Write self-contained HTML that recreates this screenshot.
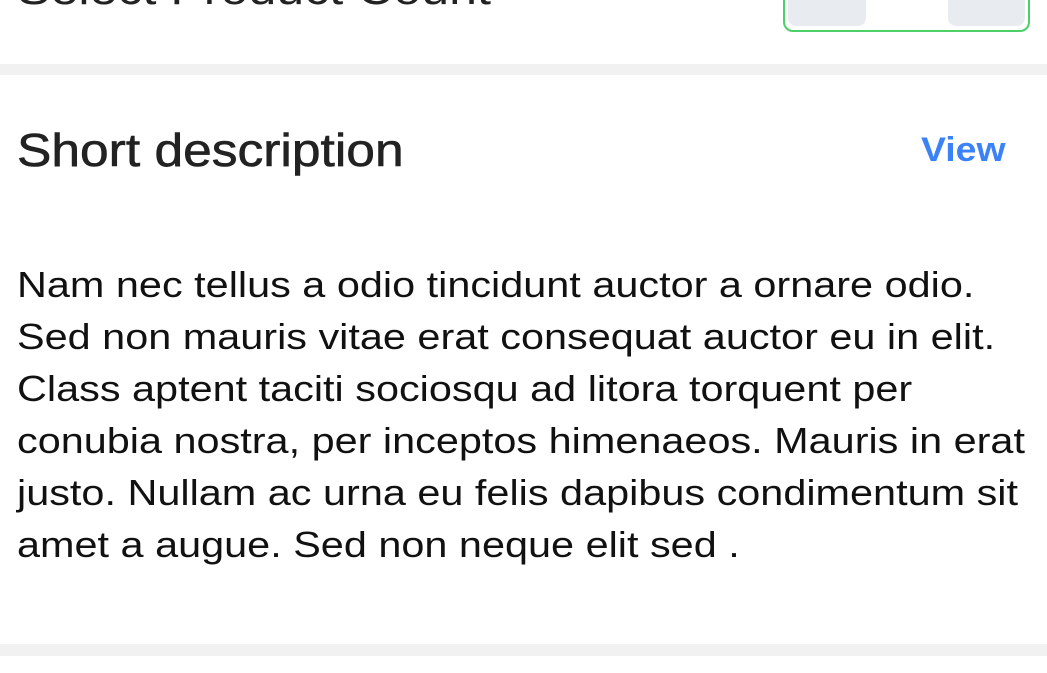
<!DOCTYPE html>
<html><head><meta charset="utf-8"><style>
html,body{margin:0;padding:0;width:1047px;height:673px;overflow:hidden;background:#fff;font-family:"Liberation Sans",sans-serif;position:relative}
.abs{position:absolute;transform-origin:0 0}
.bar{position:absolute;left:0;width:1047px;background:#f1f1f1}
.ln{position:absolute;left:17px;font-size:36px;color:#111;white-space:nowrap;line-height:40px;transform:scaleX(1.15);transform-origin:0 0}
</style></head><body>
<div class="abs" style="left:17px;top:-30px;font-size:44px;color:#222;white-space:nowrap;line-height:40px;transform:scaleX(1.14)">Select Product Count</div>
<div class="abs" style="left:783px;top:-20px;width:243px;height:48px;border:2px solid #4cd06a;border-radius:10px;background:#fff"></div>
<div class="abs" style="left:788px;top:-20px;width:78px;height:46px;background:#e8ebf0;border-radius:0 0 8px 8px"></div>
<div class="abs" style="left:948px;top:-20px;width:77px;height:46px;background:#e8ebf0;border-radius:0 0 8px 8px"></div>
<div class="bar" style="top:64px;height:11px"></div>
<div class="abs" style="left:17px;top:125px;font-size:46px;color:#222;line-height:50px;white-space:nowrap;transform:scaleX(1.12);-webkit-text-stroke:0.6px #222">Short description</div>
<div class="abs" style="left:921px;top:130px;font-size:34px;color:#3b82f6;font-weight:bold;line-height:40px;transform:scaleX(1.1)">View</div>
<div class="ln" style="top:265px">Nam nec tellus a odio tincidunt auctor a ornare odio.</div>
<div class="ln" style="top:317px">Sed non mauris vitae erat consequat auctor eu in elit.</div>
<div class="ln" style="top:369px">Class aptent taciti sociosqu ad litora torquent per</div>
<div class="ln" style="top:421px">conubia nostra, per inceptos himenaeos. Mauris in erat</div>
<div class="ln" style="top:473px">justo. Nullam ac urna eu felis dapibus condimentum sit</div>
<div class="ln" style="top:525px">amet a augue. Sed non neque elit sed .</div>
<div class="bar" style="top:644px;height:12px"></div>
</body></html>
